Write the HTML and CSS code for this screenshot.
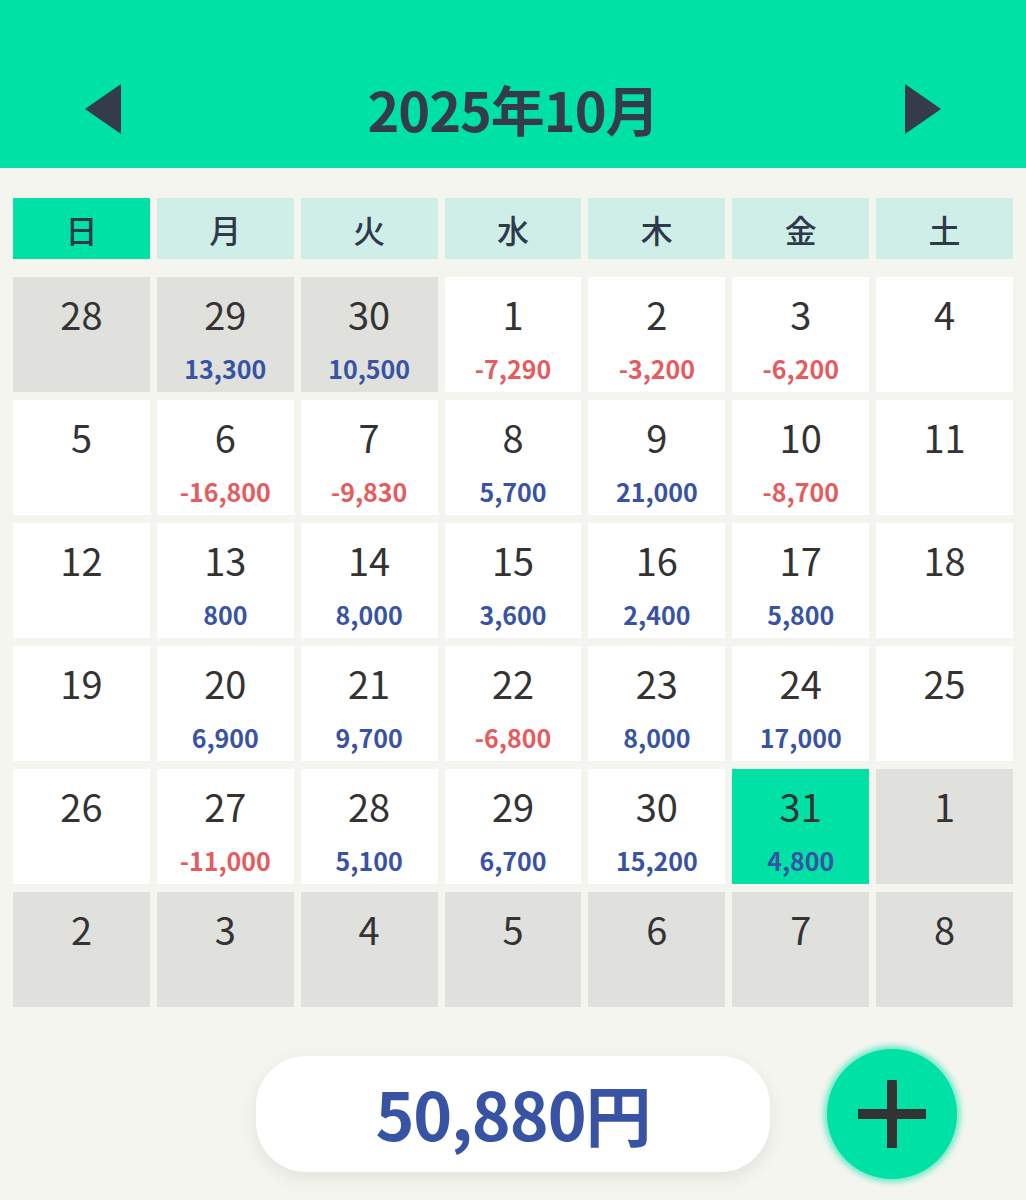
FILE: index.html
```html
<!DOCTYPE html>
<html lang="ja">
<head>
<meta charset="utf-8">
<title>2025年10月</title>
<link rel="stylesheet" href="styles.css">
</head>
<body>
<header class="header">
  <button class="nav prev" aria-label="前の月"><svg width="36" height="50" viewBox="0 0 36 50"><polygon points="36,0 36,50 0,25" fill="#343c4c"/></svg></button>
  <h1 class="title">2025年10月</h1>
  <button class="nav next" aria-label="次の月"><svg width="36" height="50" viewBox="0 0 36 50"><polygon points="0,0 0,50 36,25" fill="#343c4c"/></svg></button>
</header>
<main class="cal">
  <div class="week-head">
    <div class="wd sun">日</div><div class="wd">月</div><div class="wd">火</div><div class="wd">水</div><div class="wd">木</div><div class="wd">金</div><div class="wd">土</div>
  </div>
  <div class="days">
    <div class="day out"><span class="num">28</span></div>
    <div class="day out"><span class="num">29</span><span class="amt plus">13,300</span></div>
    <div class="day out"><span class="num">30</span><span class="amt plus">10,500</span></div>
    <div class="day"><span class="num">1</span><span class="amt minus">-7,290</span></div>
    <div class="day"><span class="num">2</span><span class="amt minus">-3,200</span></div>
    <div class="day"><span class="num">3</span><span class="amt minus">-6,200</span></div>
    <div class="day"><span class="num">4</span></div>

    <div class="day"><span class="num">5</span></div>
    <div class="day"><span class="num">6</span><span class="amt minus">-16,800</span></div>
    <div class="day"><span class="num">7</span><span class="amt minus">-9,830</span></div>
    <div class="day"><span class="num">8</span><span class="amt plus">5,700</span></div>
    <div class="day"><span class="num">9</span><span class="amt plus">21,000</span></div>
    <div class="day"><span class="num">10</span><span class="amt minus">-8,700</span></div>
    <div class="day"><span class="num">11</span></div>

    <div class="day"><span class="num">12</span></div>
    <div class="day"><span class="num">13</span><span class="amt plus">800</span></div>
    <div class="day"><span class="num">14</span><span class="amt plus">8,000</span></div>
    <div class="day"><span class="num">15</span><span class="amt plus">3,600</span></div>
    <div class="day"><span class="num">16</span><span class="amt plus">2,400</span></div>
    <div class="day"><span class="num">17</span><span class="amt plus">5,800</span></div>
    <div class="day"><span class="num">18</span></div>

    <div class="day"><span class="num">19</span></div>
    <div class="day"><span class="num">20</span><span class="amt plus">6,900</span></div>
    <div class="day"><span class="num">21</span><span class="amt plus">9,700</span></div>
    <div class="day"><span class="num">22</span><span class="amt minus">-6,800</span></div>
    <div class="day"><span class="num">23</span><span class="amt plus">8,000</span></div>
    <div class="day"><span class="num">24</span><span class="amt plus">17,000</span></div>
    <div class="day"><span class="num">25</span></div>

    <div class="day"><span class="num">26</span></div>
    <div class="day"><span class="num">27</span><span class="amt minus">-11,000</span></div>
    <div class="day"><span class="num">28</span><span class="amt plus">5,100</span></div>
    <div class="day"><span class="num">29</span><span class="amt plus">6,700</span></div>
    <div class="day"><span class="num">30</span><span class="amt plus">15,200</span></div>
    <div class="day today"><span class="num">31</span><span class="amt plus">4,800</span></div>
    <div class="day out"><span class="num">1</span></div>

    <div class="day out"><span class="num">2</span></div>
    <div class="day out"><span class="num">3</span></div>
    <div class="day out"><span class="num">4</span></div>
    <div class="day out"><span class="num">5</span></div>
    <div class="day out"><span class="num">6</span></div>
    <div class="day out"><span class="num">7</span></div>
    <div class="day out"><span class="num">8</span></div>
  </div>
</main>
<footer class="footer">
  <div class="total">50,880円</div>
  <button class="add" aria-label="追加"><span class="bar h"></span><span class="bar v"></span></button>
</footer>
</body>
</html>
```
FILE: styles.css
```css
html, body {
  margin: 0;
  padding: 0;
}
body {
  width: 1026px;
  height: 1200px;
  background: #f5f5f0;
  font-family: "Noto Sans CJK JP", "Noto Sans", sans-serif;
  color: #333333;
  overflow: hidden;
}
.header {
  box-sizing: border-box;
  height: 168px;
  padding-top: 50px;
  background: #00e1a5;
  display: flex;
  align-items: center;
  justify-content: space-between;
  padding-left: 85px;
  padding-right: 85px;
}
.nav {
  border: 0;
  background: transparent;
  padding: 0;
  width: 36px;
  height: 50px;
  display: flex;
}
.title {
  margin: 0;
  font-size: 54px;
  font-weight: 700;
  color: #343c4c;
  letter-spacing: -1px;
  line-height: 1;
}
.cal {
  padding: 30px 13px 0;
}
.week-head {
  display: grid;
  grid-template-columns: repeat(7, 1fr);
  column-gap: 7px;
  height: 61px;
}
.wd {
  background: #d0eee8;
  display: flex;
  align-items: center;
  justify-content: center;
  font-size: 32px;
  font-weight: 500;
  color: #2e3a4a;
}
.wd.sun {
  background: #00e1a5;
}
.days {
  margin-top: 18px;
  display: grid;
  grid-template-columns: repeat(7, 1fr);
  grid-auto-rows: 115px;
  column-gap: 7px;
  row-gap: 8px;
}
.day {
  background: #ffffff;
  display: flex;
  flex-direction: column;
  align-items: center;
}
.day.out {
  background: #e0e0dc;
}
.day.today {
  background: #00e1a5;
}
.num {
  margin-top: 13px;
  font-size: 38px;
  line-height: 48px;
  color: #333333;
}
.amt {
  margin-top: 15px;
  font-size: 25px;
  line-height: 30px;
  font-weight: 700;
}
.amt.plus {
  color: #3853a4;
}
.amt.minus {
  color: #e55b5e;
}
.footer {
  margin-top: 42px;
  display: grid;
  grid-template-columns: 1fr 514px 1fr;
  align-items: center;
}
.total {
  grid-column: 2;
  box-sizing: border-box;
  height: 116px;
  padding-bottom: 4px;
  border-radius: 50px;
  background: #ffffff;
  box-shadow: 0 6px 18px rgba(0, 0, 0, 0.08);
  display: flex;
  align-items: center;
  justify-content: center;
  font-size: 66px;
  font-weight: 700;
  color: #3853a4;
  letter-spacing: -1px;
}
.add {
  grid-column: 3;
  justify-self: start;
  margin-left: 57px;
  width: 130px;
  height: 130px;
  border: 0;
  padding: 0;
  border-radius: 50%;
  background: #00e1a5;
  box-shadow: 0 0 6px 3px rgba(0, 225, 165, 0.6);
  position: relative;
}
.bar {
  position: absolute;
  background: #333333;
}
.bar.h {
  width: 68px;
  height: 10px;
  left: 31px;
  top: 60px;
}
.bar.v {
  width: 10px;
  height: 68px;
  left: 60px;
  top: 31px;
}
```
